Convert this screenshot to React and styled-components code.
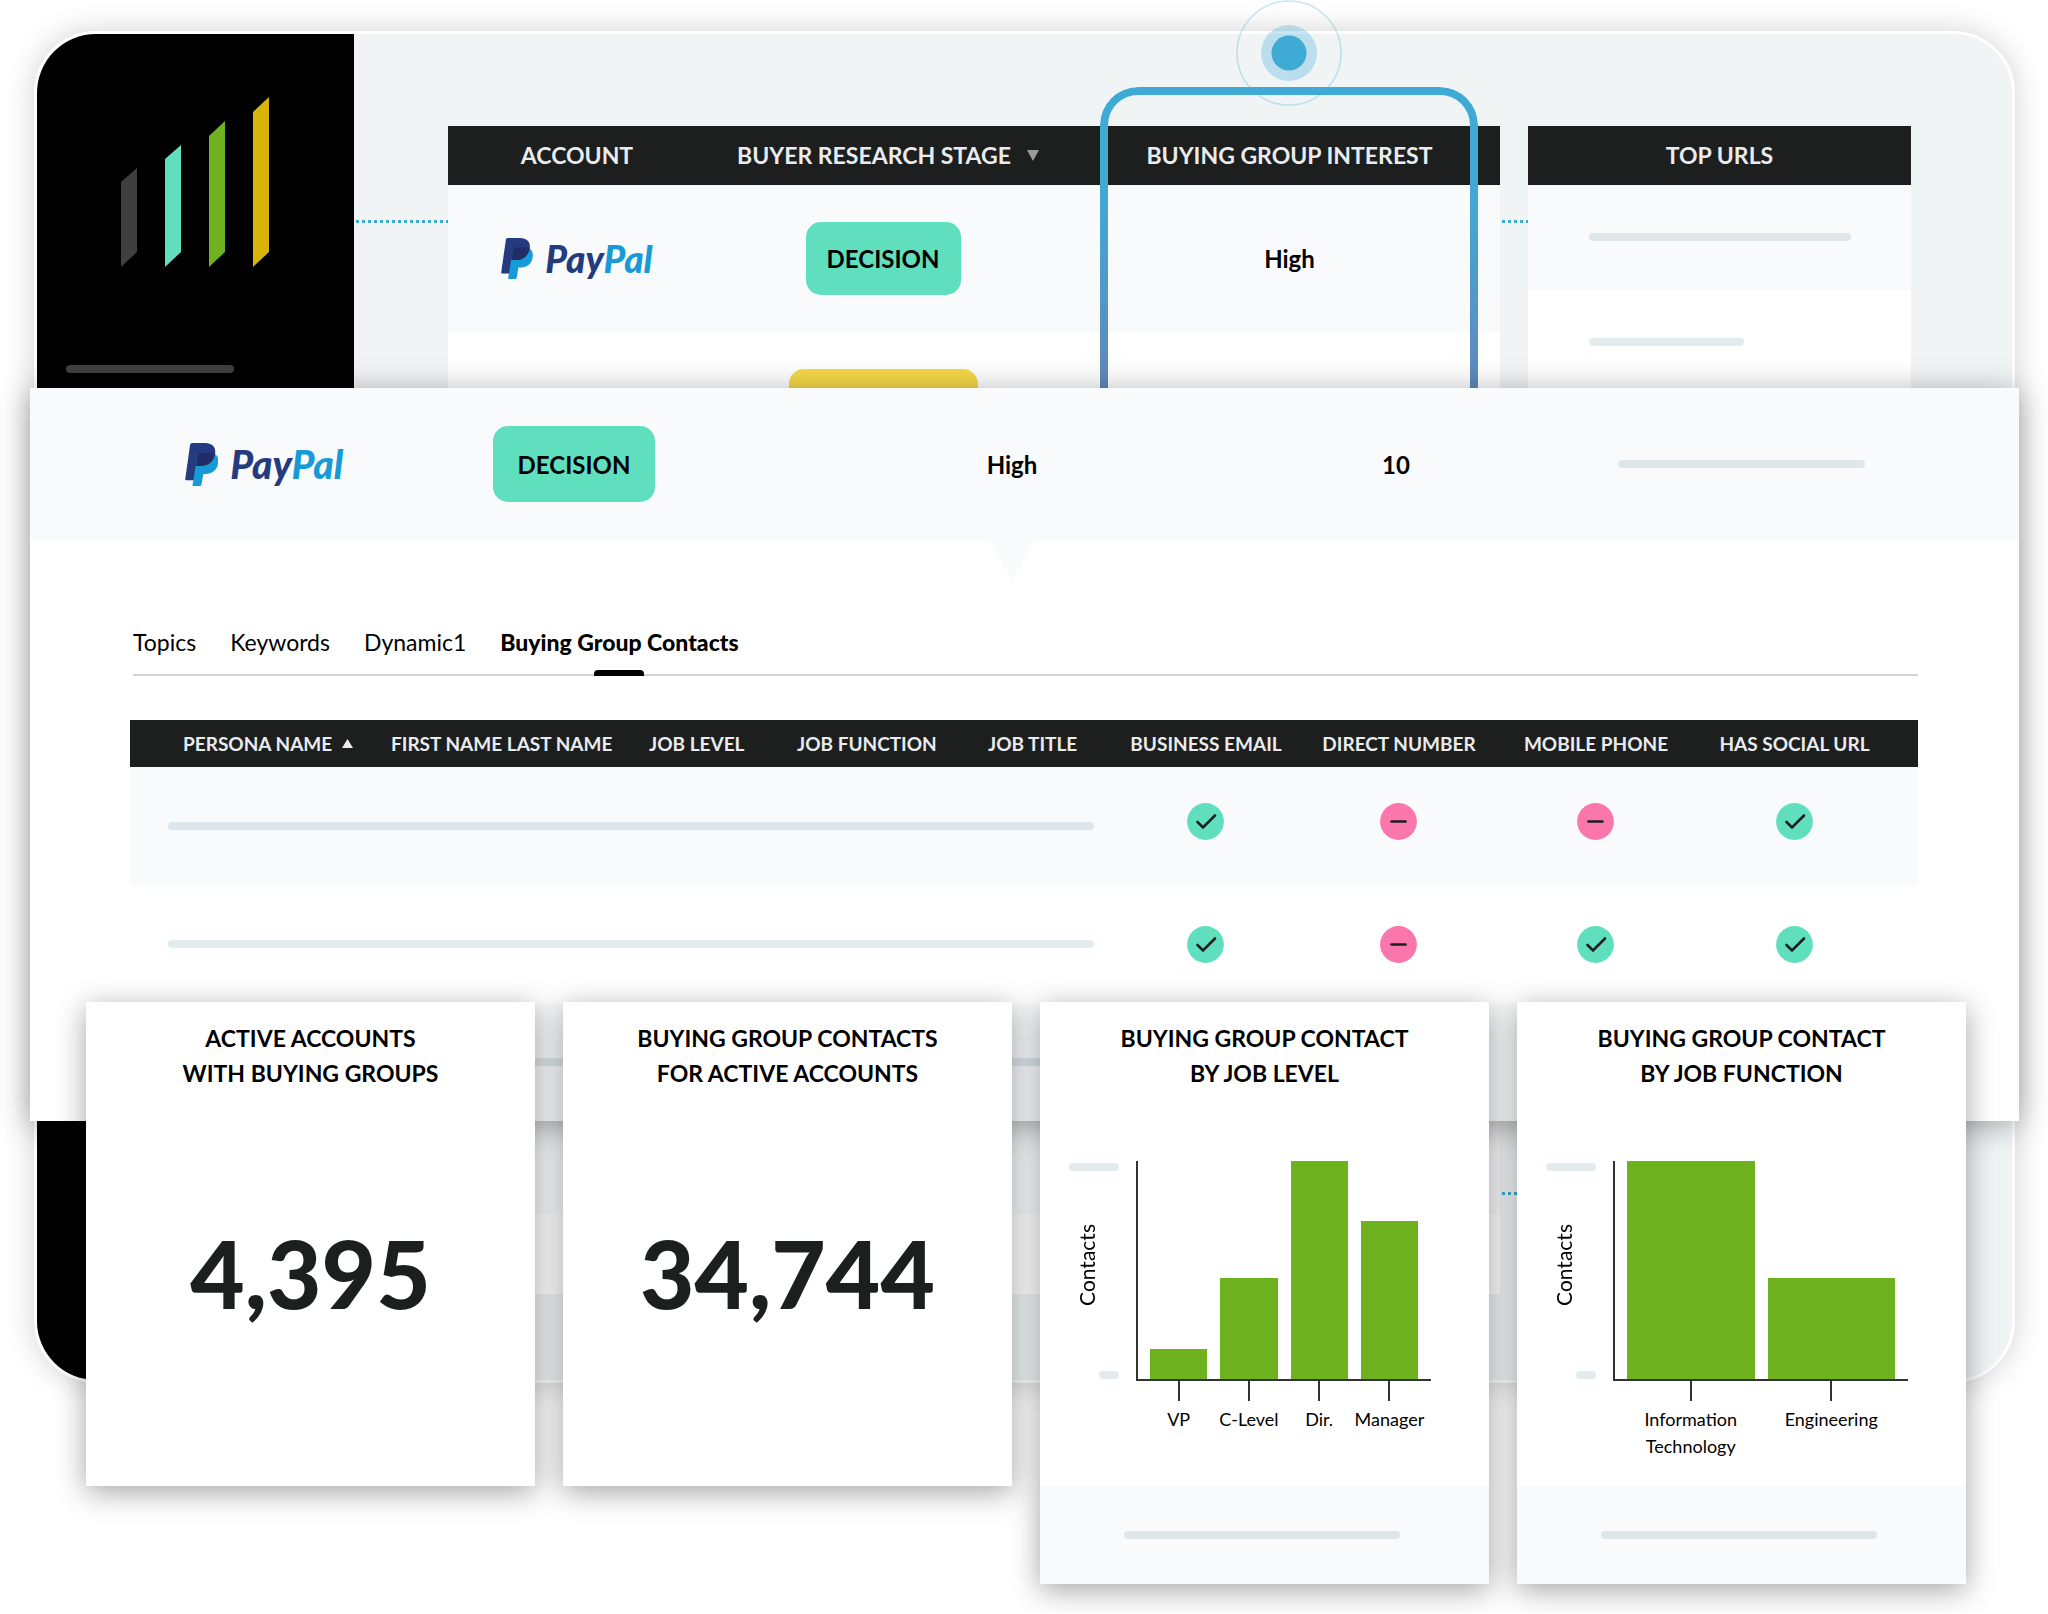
import React from "react";
import styled, { createGlobalStyle } from "styled-components";

const ink = "#1d1f1e";
const mint = "#60dfbf";
const pink = "#fb77ab";
const leaf = "#6fb21f";
const sky = "#3fabd5";
const tint = "#f9fafc";

const GlobalStyle = createGlobalStyle`
  *, *::before, *::after { box-sizing: border-box; }
  body {
    margin: 0;
    background: #fff;
    color: #000;
    font-family: Lato, "Open Sans", sans-serif;
    font-size: 24px;
    line-height: 35px;
  }
  button { font: inherit; color: inherit; background: none; border: 0; padding: 0; cursor: pointer; }
  h2, p { margin: 0; }
`;

/* The three layers share one grid cell and overlap from back to front. */
const Stage = styled.main`
  display: grid;
  grid-template-columns: minmax(0, 1fr);
  align-items: start;
  padding-bottom: 29px;
  overflow: hidden;
  > * { grid-area: 1 / 1; isolation: isolate; }
`;

/* ---------- shared parts ---------- */

const Placeholder = styled.div`
  width: ${(p) => p.$width || "100%"};
  height: 8px;
  border-radius: 4px;
  background: ${(p) => p.$color || "#e4ebec"};
`;

const StagePill = styled.span`
  display: inline-flex;
  align-items: center;
  justify-content: center;
  vertical-align: middle;
  width: ${(p) => p.$width}px;
  height: ${(p) => p.$height}px;
  border-radius: 15px;
  background: ${(p) => p.$color || mint};
  font-weight: 700;
`;

const Brand = styled.span`
  display: inline-flex;
  align-items: center;
  gap: 12px;
  vertical-align: middle;
  font-size: ${(p) => p.$size}px;
  font-weight: 900;
  font-style: italic;
  line-height: 44px;
  color: #253b80;
  svg { height: ${(p) => p.$size + 4}px; width: auto; flex: none; }
`;

const BrandTail = styled.span`
  color: #179bd7;
`;

function PayPal({ size }) {
  return (
    <Brand $size={size}>
      <svg viewBox="0 0 32 41" aria-hidden="true">
        <path fill="#253b80" d="M4.9 1.5Q5.2 0 6.8 0H19C27 0 30 5 28.6 11.5 27 18.5 22 22 15 22H11L9 35.5H1Q0 35.5.2 34.5Z" />
        <path fill="#179bd7" d="M12 10.5 28.6 10.8C31.4 12.4 32.4 15.5 31.5 20 30.3 26 26 29.5 20 29.5H17.5L15.6 40Q15.4 41 14.2 41H8Q7 41 7.2 40Z" />
        <path fill="#222d65" d="M12 10.8Q12.3 9.5 13.6 9.5H25Q27 9.6 28.7 10.8C27 18.5 22 22 15 22H10.2Z" />
      </svg>
      <span>Pay<BrandTail>Pal</BrandTail></span>
    </Brand>
  );
}

const SortButton = styled.button`
  display: inline-flex;
  align-items: center;
  gap: ${(p) => p.$gap}px;
`;

/* ---------- back layer ---------- */

const Backdrop = styled.section`
  display: flex;
  align-items: flex-start;
  margin: 31px 33px 0 34px;
  padding-right: 101px;
  border: 3px solid #fff;
  border-radius: 62px;
  background: #f0f4f5;
  box-shadow: 0 0 30px rgba(0, 0, 0, 0.18);
`;

const Sidebar = styled.aside`
  flex: 0 0 317px;
  align-self: stretch;
  min-height: 1346px;
  padding: 63px 29px 0;
  border-radius: 59px 0 0 59px;
  background: #000;
`;

const Logo = styled.svg`
  display: block;
  width: 148px;
  height: 170px;
  margin: 0 0 98px 55px;
`;

const Connector = styled.div`
  flex: 0 0 ${(p) => p.$width}px;
  display: flex;
  flex-direction: column;
  gap: 969px;
  padding: 186px 0 0 2px;
`;

const Dots = styled.div`
  height: 3px;
  background: repeating-linear-gradient(90deg, ${sky} 0 3px, transparent 3px 6px);
`;

const AccountsWrap = styled.div`
  position: relative;
  flex: 1052 1 0;
  padding-top: 92px;
`;

const UrlsWrap = styled.div`
  flex: 383 1 0;
  padding-top: 92px;
`;

const BackTable = styled.table`
  width: 100%;
  table-layout: fixed;
  border-collapse: collapse;
  th {
    height: 59px;
    padding: 0;
    background: ${ink};
    color: #e9ebee;
    font-size: 23px;
    font-weight: 700;
    white-space: nowrap;
  }
  th:nth-child(2) { padding-right: 30px; }
  th:nth-child(3) { padding-right: 21px; }
  td { padding: 0; text-align: center; font-weight: 700; }
  td:nth-child(2) { padding-right: 40px; }
  td:nth-child(3) { padding-right: 21px; }
`;

const BackRow = styled.tr`
  height: ${(p) => p.$height}px;
  background: ${(p) => (p.$tinted ? tint : "#fff")};
`;

const UrlCell = styled.td`
  && { padding: 0 60px 2px 61px; }
`;

/* Gradient outline laid over the interest column. */
const Highlight = styled.div`
  position: absolute;
  top: 53px;
  bottom: -20px;
  left: 62%;
  right: 22px;
  padding: 8px;
  border-radius: 38px;
  background: linear-gradient(${sky} 8%, #6387bb 25%, #a95f9c);
  mask: linear-gradient(#000 0 0) content-box exclude, linear-gradient(#000 0 0);
  pointer-events: none;
`;

const Pulse = styled.svg`
  position: absolute;
  top: -34px;
  left: calc(81% - 64px);
  width: 106px;
  height: 106px;
`;

/* ---------- middle layer ---------- */

const Detail = styled.section`
  margin: 388px 29px 0 30px;
  background: #fff;
  box-shadow: 0 4px 30px rgba(0, 0, 0, 0.34);
`;

const Summary = styled.header`
  display: grid;
  grid-template-columns: 310fr 310fr 566fr 202fr 489fr;
  height: 152px;
  padding: 0 33px 0 79px;
  background: ${tint};
  font-weight: 700;
`;

const SummaryCell = styled.div`
  position: relative;
  display: flex;
  align-items: center;
  justify-content: center;
`;

const Notch = styled.svg`
  position: absolute;
  top: 100%;
  width: 46px;
  height: 40px;
`;

const DetailBody = styled.div`
  padding: 79px 101px 0 100px;
`;

const Tabs = styled.nav`
  display: flex;
  gap: 34px;
  margin: 0 0 44px 3px;
  border-bottom: 2px solid #d3d5d5;
`;

const Tab = styled.button`
  position: relative;
  padding: 6px 0 14px;
  font-size: 23px;
  font-weight: ${(p) => (p.$active ? 900 : 400)};
  &::after {
    content: "";
    display: ${(p) => (p.$active ? "block" : "none")};
    position: absolute;
    bottom: -2px;
    left: calc(50% - 25px);
    width: 50px;
    height: 6px;
    border-radius: 4px 4px 0 0;
    background: #000;
  }
`;

const Contacts = styled.table`
  width: 100%;
  table-layout: fixed;
  border-collapse: collapse;
  th {
    height: 47px;
    padding: 0;
    background: ${ink};
    color: #e9ebee;
    font-size: 19px;
    line-height: 24px;
    font-weight: 700;
    text-align: left;
    white-space: nowrap;
  }
  th:first-child { padding-left: 53px; }
  th:nth-child(n + 6) { text-align: center; }
  th:last-child, td:last-child { padding-right: 26px; }
`;

const ContactRow = styled.tr`
  height: 118px;
  background: ${(p) => (p.$tinted ? tint : "#fff")};
`;

const LineCell = styled.td`
  padding: 0 15px 0 38px;
`;

const StatusCell = styled.td`
  padding: 0 2px ${(p) => (p.$raised ? 10 : 0)}px 0;
  svg { display: block; margin: 0 auto; }
`;

function Status({ ok }) {
  return (
    <svg width="37" height="37" viewBox="0 0 37 37" role="img" aria-label={ok ? "Available" : "Missing"}>
      <circle cx="18.500" cy="18.500" r="18.400" fill={ok ? mint : pink} />
      <path
        d={ok ? "M10.500 19 16 24.500 28 12.500" : "M11.500 18.500H25.500"}
        fill="none"
        stroke={ink}
        strokeWidth="2.600"
        strokeLinecap="round"
      />
    </svg>
  );
}

/* ---------- front layer ---------- */

const Cards = styled.section`
  display: grid;
  grid-template-columns: repeat(4, minmax(0, 1fr));
  align-items: start;
  gap: 28px;
  margin: 1002px 82px 0 86px;
`;

const Card = styled.article`
  background: #fff;
  box-shadow: 0 6px 28px rgba(0, 0, 0, 0.36);
`;

const CardBody = styled.div`
  display: flex;
  flex-direction: column;
  height: 484px;
  padding: 19px 29px 0;
`;

const CardTitle = styled.h2`
  font-size: 23px;
  font-weight: 700;
  text-align: center;
  white-space: nowrap;
`;

const Figure = styled.p`
  margin-top: 122px;
  color: ${ink};
  font-size: 94px;
  line-height: 120px;
  font-weight: 900;
  text-align: center;
`;

const CardFooter = styled.footer`
  display: flex;
  align-items: center;
  justify-content: center;
  height: 98px;
  padding-right: 6px;
  background: ${tint};
`;

const Chart = styled.div`
  display: grid;
  grid-template-columns: 50px minmax(0, 1fr);
  column-gap: 17px;
  margin: 70px 29px 0 0;
`;

const YAxis = styled.div`
  display: flex;
  flex-direction: column;
  align-items: flex-end;
  justify-content: space-between;
  padding: 2px 0;
`;

const YLabel = styled.span`
  margin: 0 20px 12px 0;
  writing-mode: vertical-rl;
  rotate: 180deg;
  font-size: 21px;
  line-height: 24px;
`;

const Plot = styled.div`
  display: grid;
  grid-template-columns: repeat(${(p) => p.$count}, minmax(0, 1fr));
  align-items: end;
  column-gap: 13px;
  height: 220px;
  padding: 0 13px 0 12px;
  border-left: 2px solid #333;
  border-bottom: 2px solid #333;
`;

const Bar = styled.div`
  height: ${(p) => p.$value}px;
  background: ${leaf};
`;

const XAxis = styled.div`
  grid-column: 2;
  display: grid;
  grid-template-columns: repeat(${(p) => p.$count}, minmax(0, 1fr));
  column-gap: 13px;
  padding: 0 13px 0 14px;
`;

const XLabel = styled.div`
  display: flex;
  flex-direction: column;
  align-items: center;
  gap: 5px;
  font-size: 18px;
  line-height: 27px;
  text-align: center;
  white-space: pre;
  &::before { content: ""; width: 2px; height: 20px; background: #333; }
`;

function ChartCard({ title, bars }) {
  return (
    <Card>
      <CardBody>
        <CardTitle>{title[0]}<br />{title[1]}</CardTitle>
        <Chart>
          <YAxis>
            <Placeholder />
            <YLabel>Contacts</YLabel>
            <Placeholder $width="20px" />
          </YAxis>
          <Plot $count={bars.length}>
            {bars.map(([label, value]) => <Bar key={label} $value={value} />)}
          </Plot>
          <XAxis $count={bars.length}>
            {bars.map(([label]) => <XLabel key={label}>{label}</XLabel>)}
          </XAxis>
        </Chart>
      </CardBody>
      <CardFooter><Placeholder $width="276px" $color="#dfe6e9" /></CardFooter>
    </Card>
  );
}

function NumberCard({ title, value }) {
  return (
    <Card>
      <CardBody>
        <CardTitle>{title[0]}<br />{title[1]}</CardTitle>
        <Figure>{value}</Figure>
      </CardBody>
    </Card>
  );
}

/* ---------- data ---------- */

const contactColumns = [
  ["PERSONA NAME", 261],
  ["FIRST NAME LAST NAME", 258],
  ["JOB LEVEL", 148],
  ["JOB FUNCTION", 191],
  ["JOB TITLE", 121],
  ["BUSINESS EMAIL", 194],
  ["DIRECT NUMBER", 192],
  ["MOBILE PHONE", 202],
  ["HAS SOCIAL URL", 221],
];
const totalUnits = contactColumns.reduce((sum, c) => sum + c[1], 0);

const contactRows = [
  [true, false, false, true],
  [true, false, true, true],
  [],
];

const jobLevels = [["VP", 30], ["C-Level", 101], ["Dir.", 218], ["Manager", 158]];
const jobFunctions = [["Information\nTechnology", 218], ["Engineering", 101]];

export default function App() {
  return (
    <>
      <GlobalStyle />
      <Stage>
        <Backdrop>
          <Sidebar>
            <Logo viewBox="121 97 148 170" aria-hidden="true">
              <path fill="#3f3f3f" d="M121 182 137 168V252L121 267Z" />
              <path fill={mint} d="M165 159 181 145V252L165 267Z" />
              <path fill={leaf} d="M209 136 225 121V252L209 267Z" />
              <path fill="#d9b408" d="M253 112 269 97V252L253 267Z" />
            </Logo>
            <Placeholder $width="168px" $color="#3f3f3f" />
          </Sidebar>
          <Connector $width={94}><Dots /><Dots /></Connector>
          <AccountsWrap>
            <BackTable>
              <colgroup>
                <col style={{ width: `${(258 / 1052) * 100}%` }} />
                <col style={{ width: `${(394 / 1052) * 100}%` }} />
                <col />
              </colgroup>
              <thead>
                <tr>
                  <th>ACCOUNT</th>
                  <th>
                    <SortButton $gap={16}>
                      BUYER RESEARCH STAGE
                      <svg width="12" height="11" viewBox="0 0 12 11" aria-hidden="true"><path d="M0 0H12L6 11Z" fill="#9a9c9c" /></svg>
                    </SortButton>
                  </th>
                  <th>BUYING GROUP INTEREST</th>
                </tr>
              </thead>
              <tbody>
                <BackRow $height={147} $tinted>
                  <td><PayPal size={37} /></td>
                  <td><StagePill $width={155} $height={73}>DECISION</StagePill></td>
                  <td>High</td>
                </BackRow>
                <BackRow $height={147}>
                  <td />
                  <td><StagePill $width={189} $height={73} $color="#f5d848" /></td>
                  <td />
                </BackRow>
                {[147, 147, 147, 147, 147, 80].map((height, i) => (
                  <BackRow key={i} $height={height} $tinted={i % 2 === 0}><td /><td /><td /></BackRow>
                ))}
              </tbody>
            </BackTable>
            <Highlight />
            <Pulse viewBox="0 0 106 106" aria-hidden="true">
              <circle cx="53" cy="53" r="52" fill="none" stroke={sky} strokeOpacity=".3" strokeWidth="1.500" />
              <circle cx="53" cy="53" r="28" fill={sky} fillOpacity=".3" />
              <circle cx="53" cy="53" r="17.500" fill={sky} />
            </Pulse>
          </AccountsWrap>
          <Connector $width={28}><Dots /><Dots /></Connector>
          <UrlsWrap>
            <BackTable>
              <thead><tr><th>TOP URLS</th></tr></thead>
              <tbody>
                <BackRow $height={105} $tinted><UrlCell><Placeholder $color="#dfe6e9" /></UrlCell></BackRow>
                <BackRow $height={105}><UrlCell><Placeholder $width="59%" /></UrlCell></BackRow>
              </tbody>
            </BackTable>
          </UrlsWrap>
        </Backdrop>

        <Detail>
          <Summary>
            <SummaryCell><PayPal size={39} /></SummaryCell>
            <SummaryCell><StagePill $width={162} $height={76}>DECISION</StagePill></SummaryCell>
            <SummaryCell>
              High
              <Notch viewBox="0 0 46 40" aria-hidden="true"><path d="M0 0H46L23 40Z" fill={tint} /></Notch>
            </SummaryCell>
            <SummaryCell>10</SummaryCell>
            <SummaryCell><Placeholder $width="247px" $color="#dfe6e9" /></SummaryCell>
          </Summary>
          <DetailBody>
            <Tabs role="tablist">
              <Tab role="tab">Topics</Tab>
              <Tab role="tab">Keywords</Tab>
              <Tab role="tab">Dynamic1</Tab>
              <Tab role="tab" aria-selected="true" $active>Buying Group Contacts</Tab>
            </Tabs>
            <Contacts>
              <colgroup>
                {contactColumns.map(([name, units]) => (
                  <col key={name} style={{ width: `${(units / totalUnits) * 100}%` }} />
                ))}
              </colgroup>
              <thead>
                <tr>
                  {contactColumns.map(([name], i) => (
                    <th key={name}>
                      {i === 0 ? (
                        <SortButton $gap={10}>
                          {name}
                          <svg width="11" height="9" viewBox="0 0 11 9" aria-hidden="true"><path d="M0 9H11L5.500 0Z" fill="#e9ebee" /></svg>
                        </SortButton>
                      ) : name}
                    </th>
                  ))}
                </tr>
              </thead>
              <tbody>
                {contactRows.map((row, i) => (
                  <ContactRow key={i} $tinted={i % 2 === 0}>
                    <LineCell colSpan={5}><Placeholder $color={i % 2 === 0 ? "#dfe6e9" : "#e4ebec"} /></LineCell>
                    {row.length === 0 && <td colSpan={4} />}
                    {row.map((ok, j) => <StatusCell key={j} $raised={i === 0}><Status ok={ok} /></StatusCell>)}
                  </ContactRow>
                ))}
              </tbody>
            </Contacts>
          </DetailBody>
        </Detail>

        <Cards>
          <NumberCard title={["ACTIVE ACCOUNTS", "WITH BUYING GROUPS"]} value="4,395" />
          <NumberCard title={["BUYING GROUP CONTACTS", "FOR ACTIVE ACCOUNTS"]} value="34,744" />
          <ChartCard title={["BUYING GROUP CONTACT", "BY JOB LEVEL"]} bars={jobLevels} />
          <ChartCard title={["BUYING GROUP CONTACT", "BY JOB FUNCTION"]} bars={jobFunctions} />
        </Cards>
      </Stage>
    </>
  );
}
